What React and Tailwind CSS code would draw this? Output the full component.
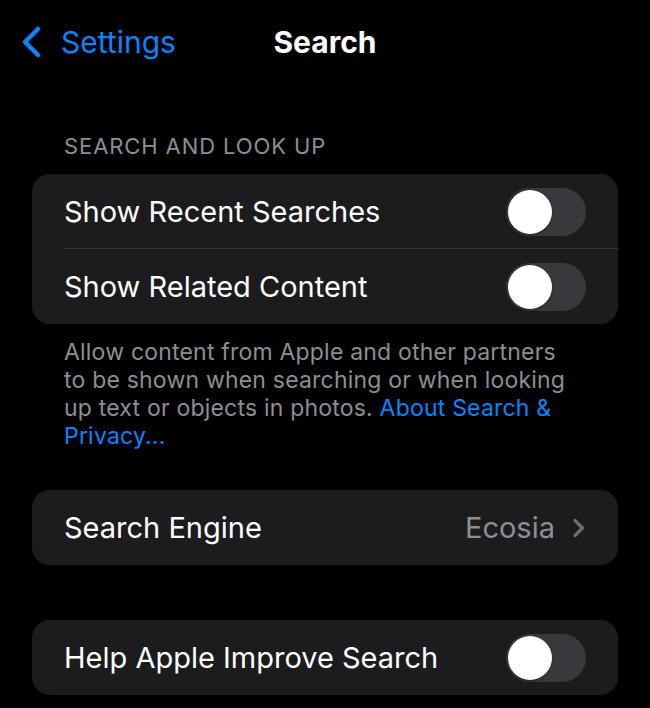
const Toggle = () => (
  <div className="w-[80px] h-[48px] rounded-full bg-[#39393d] p-[2px] flex items-center">
    <div className="w-[44px] h-[44px] rounded-full bg-white shadow-[0_1px_3px_rgba(0,0,0,0.4)]" />
  </div>
);

const Row = ({ label, children, divider }) => (
  <div className="relative h-[75px] flex items-center justify-between pl-8 pr-8">
    <span className="text-[29px] text-white">{label}</span>
    {children}
    {divider && <div className="absolute left-8 right-0 bottom-0 h-px bg-[#38383a]" />}
  </div>
);

const App = () => {
  return (
    <div className="w-[650px] h-[708px] bg-black overflow-hidden font-['Inter','Liberation_Sans',sans-serif]">
      <div className="relative h-[84px] flex items-center">
        <div className="flex items-center pl-[20px] text-[#0a84ff]">
          <svg width="24" height="34" viewBox="0 0 24 34" fill="none">
            <path d="M18 4 L5 17 L18 30" stroke="#0a84ff" strokeWidth="4.5" strokeLinecap="round" strokeLinejoin="round" />
          </svg>
          <span className="ml-[17px] text-[30px]">Settings</span>
        </div>
        <div className="absolute inset-x-0 text-center text-[30px] font-bold text-white pointer-events-none">
          Search
        </div>
      </div>

      <div className="px-8">
        <div className="pl-8 pt-[46px] pb-[12px] text-[22px] text-[#8e8e93] leading-[32px] tracking-[0.9px]">SEARCH AND LOOK UP</div>
        <div className="rounded-[18px] bg-[#1c1c1e]">
          <Row label="Show Recent Searches" divider>
            <Toggle />
          </Row>
          <Row label="Show Related Content">
            <Toggle />
          </Row>
        </div>
        <p className="pl-8 pt-[14px] text-[23px] leading-[28px] text-[#8e8e93] tracking-[0.2px]">
          Allow content from Apple and other partners
          <br />
          to be shown when searching or when looking
          <br />
          up text or objects in photos.{" "}
          <span className="text-[#0a84ff]">About Search &amp;</span>
          <br />
          <span className="text-[#0a84ff]">Privacy...</span>
        </p>

        <div className="mt-[40px] rounded-[18px] bg-[#1c1c1e]">
          <Row label="Search Engine">
            <div className="flex items-center gap-[17px]">
              <span className="text-[29px] text-[#8e8e93]">Ecosia</span>
              <svg width="14" height="20" viewBox="0 0 14 20" fill="none">
                <path d="M3 2.5 L10.5 10 L3 17.5" stroke="#6d6d72" strokeWidth="3.2" strokeLinecap="round" strokeLinejoin="round" />
              </svg>
            </div>
          </Row>
        </div>

        <div className="mt-[55px] rounded-[18px] bg-[#1c1c1e]">
          <Row label="Help Apple Improve Search">
            <Toggle />
          </Row>
        </div>
      </div>
    </div>
  );
};

export default App;
